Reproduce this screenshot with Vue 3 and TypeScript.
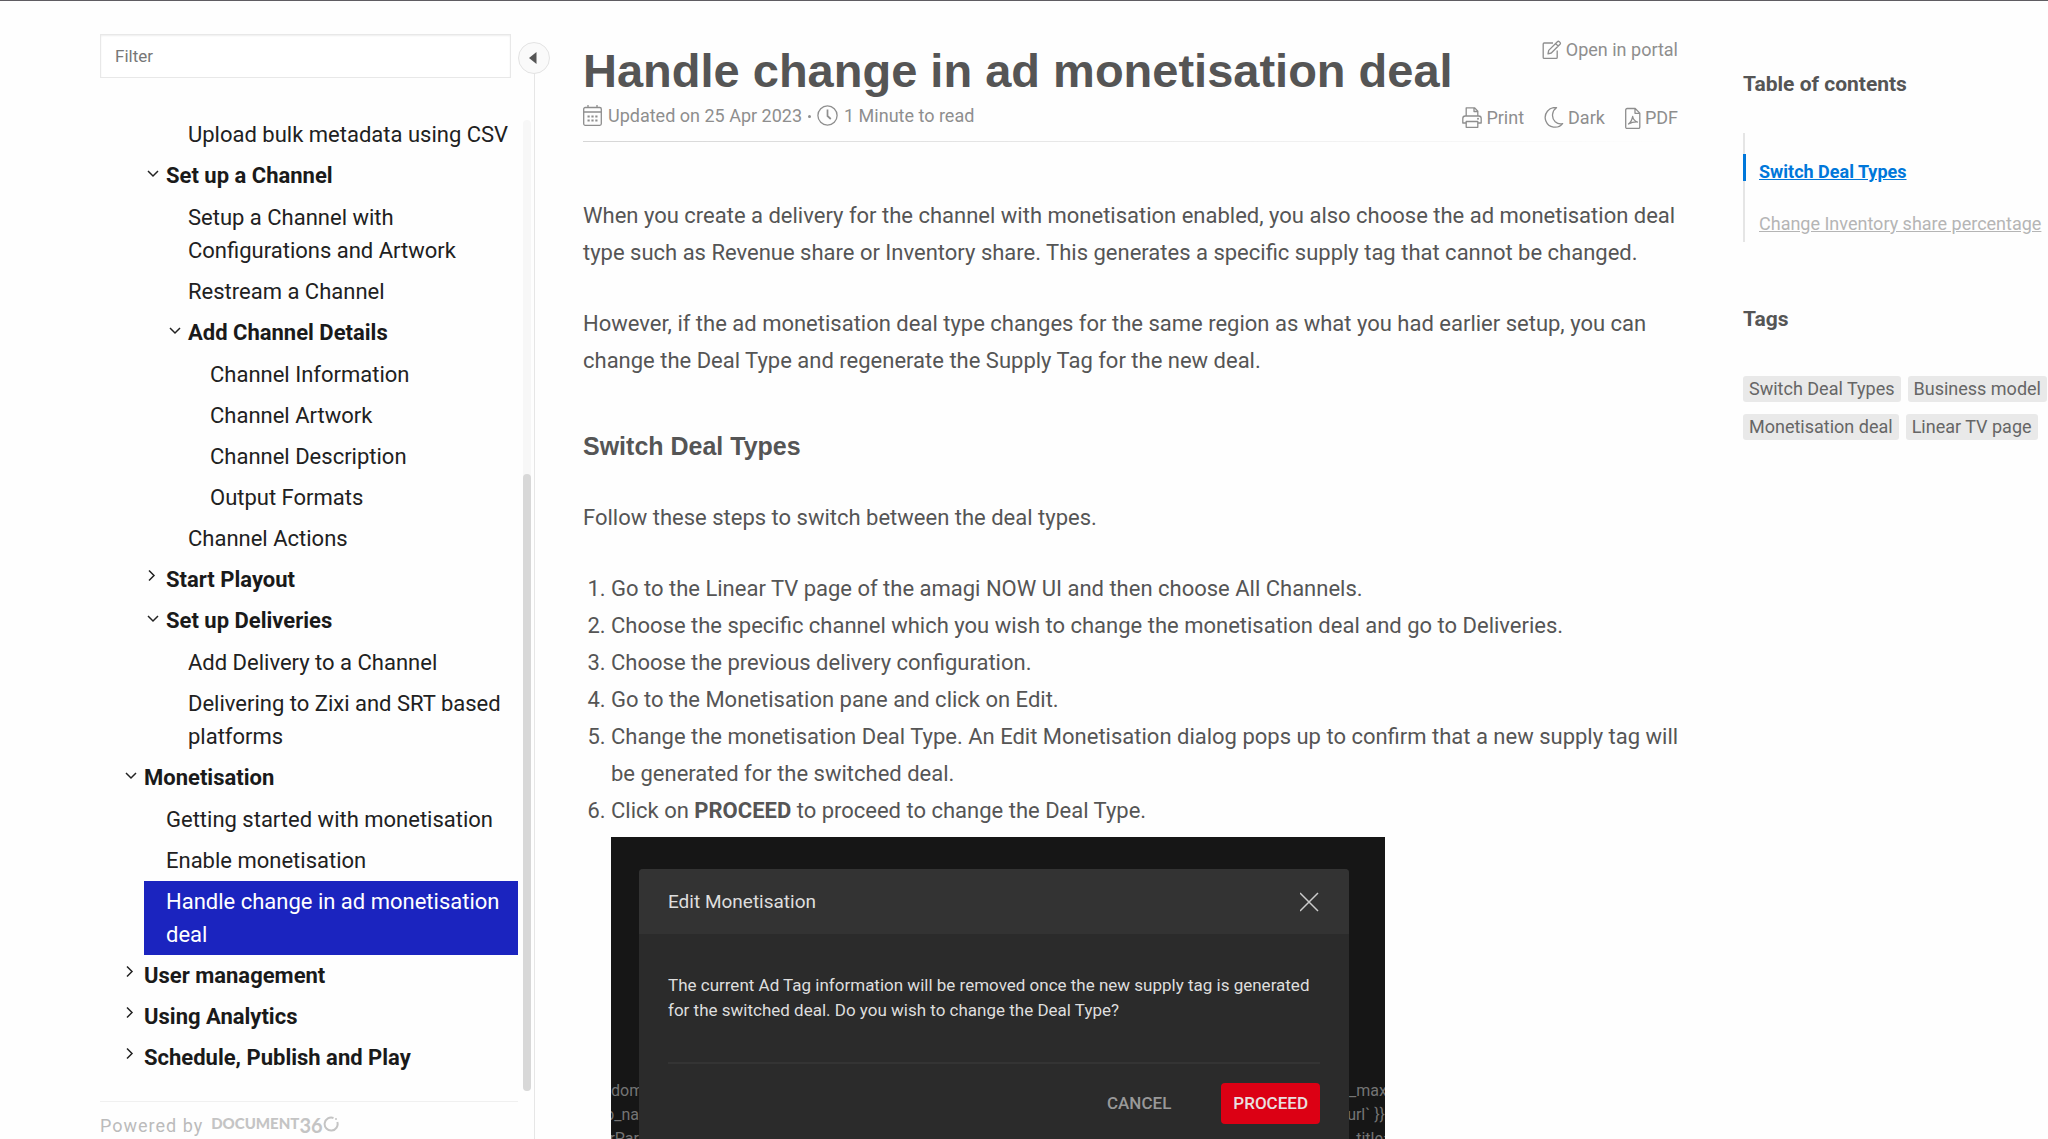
<script setup lang="ts">
import { ref } from 'vue'

interface TreeItem {
  label: string
  level: number
  state?: 'open' | 'closed'
  active?: boolean
}

const INDENT = 22

const tree: TreeItem[] = [
  { label: 'Upload bulk metadata using CSV', level: 3 },
  { label: 'Set up a Channel', level: 2, state: 'open' },
  { label: 'Setup a Channel with Configurations and Artwork', level: 3 },
  { label: 'Restream a Channel', level: 3 },
  { label: 'Add Channel Details', level: 3, state: 'open' },
  { label: 'Channel Information', level: 4 },
  { label: 'Channel Artwork', level: 4 },
  { label: 'Channel Description', level: 4 },
  { label: 'Output Formats', level: 4 },
  { label: 'Channel Actions', level: 3 },
  { label: 'Start Playout', level: 2, state: 'closed' },
  { label: 'Set up Deliveries', level: 2, state: 'open' },
  { label: 'Add Delivery to a Channel', level: 3 },
  { label: 'Delivering to Zixi and SRT based platforms', level: 3 },
  { label: 'Monetisation', level: 1, state: 'open' },
  { label: 'Getting started with monetisation', level: 2 },
  { label: 'Enable monetisation', level: 2 },
  { label: 'Handle change in ad monetisation deal', level: 2, active: true },
  { label: 'User management', level: 1, state: 'closed' },
  { label: 'Using Analytics', level: 1, state: 'closed' },
  { label: 'Schedule, Publish and Play', level: 1, state: 'closed' },
]

const steps: string[] = [
  'Go to the Linear TV page of the amagi NOW UI and then choose All Channels.',
  'Choose the specific channel which you wish to change the monetisation deal and go to Deliveries.',
  'Choose the previous delivery configuration.',
  'Go to the Monetisation pane and click on Edit.',
  'Change the monetisation Deal Type. An Edit Monetisation dialog pops up to confirm that a new supply tag will be generated for the switched deal.',
]

const tags: string[] = ['Switch Deal Types', 'Business model', 'Monetisation deal', 'Linear TV page']

const filter = ref('')
</script>

<template>
  <div class="page">
    <aside class="sidebar">
      <button class="collapse" type="button" aria-label="Collapse navigation">
        <svg width="8" height="12" viewBox="0 0 8 12"><path d="M7.500 0v12L0 6z" fill="#555" /></svg>
      </button>
      <input v-model="filter" class="filter" type="text" placeholder="Filter" aria-label="Filter" />
      <div class="tree-area">
        <nav class="tree-nav">
          <ul class="tree">
            <li
              v-for="item in tree"
              :key="item.label"
              class="node"
              :class="[item.state, { group: item.state, active: item.active }]"
              :style="{ marginLeft: item.level * INDENT + 'px' }"
            >
              <span class="toggle">
                <svg v-if="item.state" width="22" height="33" viewBox="0 0 22 33" fill="none" stroke="#222" stroke-width="1.500">
                  <path v-if="item.state === 'open'" d="M4 12l5 5 5-5" />
                  <path v-else d="M5 7.500l5 5-5 5" />
                </svg>
              </span>
              <a href="#">{{ item.label }}</a>
            </li>
          </ul>
        </nav>
        <div class="track"><div class="thumb"></div></div>
      </div>
      <footer class="powered">
        <span class="by">Powered by</span>
        <a class="brand" href="#" aria-label="Document360">
          <span class="brand-doc">DOCUMENT</span><span class="brand-num">36</span>
          <svg width="16" height="16" viewBox="0 0 16 16" fill="none" stroke="#c4c4c4" stroke-width="2">
            <path d="M10.500 2A6.500 6.500 0 1 0 14.300 6" />
            <circle cx="13" cy="3" r="1" fill="#c4c4c4" stroke="none" />
          </svg>
        </a>
      </footer>
    </aside>

    <main class="article">
      <header>
        <div class="title-row">
          <h1>Handle change in ad monetisation deal</h1>
          <a class="action" href="#">
            <svg width="20" height="20" viewBox="0 0 20 20" fill="none" stroke="currentColor" stroke-width="1.300" stroke-linejoin="round">
              <path d="M11 3H2.200Q1.200 3 1.200 4v13.400q0 1 1 1h12q1 0 1-1V10.500" />
              <path d="M6 13.800l.7-3.400 8.700-8.700q.9-.9 1.900 0l.7.700q.9.900 0 1.900l-8.700 8.700zM13.600 3.500l2.600 2.600" />
            </svg>
            Open in portal
          </a>
        </div>
        <div class="meta-row">
          <div class="meta">
            <svg width="19" height="22" viewBox="0 0 19 22" fill="none" stroke="currentColor" stroke-width="1.300">
              <rect x=".7" y="2.500" width="17.600" height="17.800" rx="1.500" />
              <path d="M.7 7h17.600M5 0v2.500M14 0v2.500" />
              <path d="M4.500 11.500h2.200M8.400 11.500h2.200M12.300 11.500h2.200M4.500 15.500h2.200M8.400 15.500h2.200M12.300 15.500h2.200" stroke-width="2" />
            </svg>
            <span>Updated on 25 Apr 2023</span>
            <span class="dot"></span>
            <svg width="21" height="22" viewBox="0 0 21 22" fill="none" stroke="currentColor" stroke-width="1.300">
              <circle cx="10.500" cy="10.500" r="9.600" />
              <path d="M10.500 4.500V11l3.300 3" stroke-width="1.700" />
            </svg>
            <span>1 Minute to read</span>
          </div>
          <div class="actions">
            <button class="action" type="button">
              <svg width="20" height="22" viewBox="0 0 20 22" fill="none" stroke="currentColor" stroke-width="1.300" stroke-linejoin="round">
                <path d="M4.200 9V.8h8.300l3.300 3.300V9M12 .8v3.700h3.800" />
                <path d="M4.200 16H.8v-4.500q0-2.500 2.500-2.500h13.400q2.500 0 2.500 2.500V16h-3.400" />
                <path d="M4.200 14.500h11.600v5.800H4.200z" />
                <circle cx="16" cy="11.800" r=".4" />
              </svg>
              Print
            </button>
            <button class="action" type="button">
              <svg width="20" height="22" viewBox="0 0 20 22" fill="none" stroke="currentColor" stroke-width="1.300" stroke-linejoin="round">
                <path d="M12.500.7A9.800 9.800 0 1 0 18.600 16.600Q14.500 17.700 11.200 14.700 8 11.500 8.600 7.100 9.200 2.800 12.500.7z" />
              </svg>
              Dark
            </button>
            <button class="action" type="button">
              <svg width="16" height="22" viewBox="0 0 16 22" fill="none" stroke="currentColor" stroke-width="1.300" stroke-linejoin="round">
                <path d="M2.200 1.500h8l4.600 4.600V20q0 1.500-1.500 1.500H2.200Q.7 21.500.7 20V3q0-1.500 1.500-1.500zM10 1.500v4.800h4.800" />
                <path d="M3.500 17q3-2 4.200-7.500.6 4 4.800 5.500-4.500-.3-9 2z" />
              </svg>
              PDF
            </button>
          </div>
        </div>
        <div class="rule"></div>
      </header>

      <p class="lead">
        When you create a delivery for the channel with monetisation enabled, you also choose the ad monetisation deal
        type such as Revenue share or Inventory share. This generates a specific supply tag that cannot be changed.
      </p>
      <p>
        However, if the ad monetisation deal type changes for the same region as what you had earlier setup, you can
        change the Deal Type and regenerate the Supply Tag for the new deal.
      </p>
      <h2>Switch Deal Types</h2>
      <p>Follow these steps to switch between the deal types.</p>
      <ol class="steps">
        <li v-for="step in steps" :key="step">{{ step }}</li>
        <li>
          Click on <b>PROCEED</b> to proceed to change the Deal Type.
          <div class="shot">
            <div class="code code-left">
              <span>dom</span>
              <span class="end">p_na</span>
              <span class="end">rPar</span>
            </div>
            <section class="dialog">
              <div class="dialog-head">
                <span>Edit Monetisation</span>
                <button type="button" class="close" aria-label="Close">
                  <svg width="20" height="20" viewBox="0 0 20 20" stroke="#ccc" stroke-width="1.500"><path d="M0 1l18 18M18 1L0 19" /></svg>
                </button>
              </div>
              <div class="dialog-body">
                <div class="dialog-text">
                  The current Ad Tag information will be removed once the new supply tag is generated<br />
                  for the switched deal. Do you wish to change the Deal Type?
                </div>
                <div class="dialog-actions">
                  <button type="button" class="cancel">CANCEL</button>
                  <button type="button" class="proceed">PROCEED</button>
                </div>
              </div>
            </section>
            <div class="code code-right">
              <span>_max</span>
              <span class="end">url` }}</span>
              <span>_title=</span>
            </div>
          </div>
        </li>
      </ol>
    </main>

    <aside class="side">
      <h3>Table of contents</h3>
      <ul class="toc">
        <li class="current"><a href="#">Switch Deal Types</a></li>
        <li><a href="#">Change Inventory share percentage</a></li>
      </ul>
      <h3>Tags</h3>
      <div class="tags">
        <a v-for="tag in tags" :key="tag" href="#" class="tag">{{ tag }}</a>
      </div>
    </aside>
  </div>
</template>

<style>
body {
  background: #fefefe;
}
</style>

<style scoped>
* {
  box-sizing: border-box;
}
.page {
  display: flex;
  height: 100vh;
  overflow: hidden;
  border-top: 1px solid #5f5d62;
  font-family: Roboto, sans-serif;
  font-size: 22px;
  color: #555;
}
h1,
h2,
h3,
p,
ul,
ol {
  margin: 0;
  padding: 0;
}
ul {
  list-style: none;
}
button {
  border: 0;
  background: none;
  padding: 0;
  font: inherit;
  color: inherit;
  cursor: pointer;
}
a {
  color: inherit;
  text-decoration: none;
}
svg {
  display: block;
  flex: none;
}

.sidebar {
  position: relative;
  flex: none;
  display: flex;
  flex-direction: column;
  width: 535px;
  padding: 33px 4px 0 100px;
}
.sidebar::after {
  content: '';
  position: absolute;
  top: 58px;
  bottom: 0;
  right: 0;
  width: 1px;
  background: #e6e6e6;
}
.collapse {
  position: absolute;
  z-index: 1;
  top: 41px;
  right: -15px;
  display: flex;
  align-items: center;
  justify-content: center;
  width: 32px;
  height: 32px;
  padding-right: 2px;
  border: 1px solid #e3e3e3;
  border-radius: 50%;
  background: #fafafa;
}
.filter {
  flex: none;
  width: 411px;
  height: 44px;
  padding: 0 14px;
  border: 1px solid #e8e8e8;
  box-shadow: inset 0 1px 2px #eee;
  background: #fff;
  font: 17px Roboto, sans-serif;
  color: #555;
  outline: 0;
}
.filter::placeholder {
  color: #777;
}
.tree-area {
  flex: 1;
  display: flex;
  gap: 5px;
  min-height: 0;
  margin-top: 36px;
}
.tree-nav {
  flex: 1;
  overflow: hidden;
}
.node {
  display: flex;
  padding: 4px 6px 4px 0;
  line-height: 33px;
  color: #212121;
}
.group {
  font-weight: 700;
  color: #1a1a1a;
}
.open {
  margin-bottom: 1px;
}
.active {
  background: #1b24bf;
  color: #fff;
}
.toggle {
  flex: none;
  width: 22px;
}
.track {
  display: flex;
  align-items: flex-end;
  width: 8px;
  margin-top: 6px;
  border-radius: 4px;
  background: #f7f7f7;
}
.thumb {
  width: 100%;
  height: calc(64% - 4px);
  border-radius: 4px;
  background: #d8d8d8;
}
.powered {
  display: flex;
  align-items: flex-start;
  gap: 8px;
  height: 38px;
  margin: 10px 13px 0 0;
  padding-top: 12px;
  border-top: 1px solid #f0f0f0;
  color: #bbb;
  line-height: 24px;
}
.by {
  font-size: 18px;
  letter-spacing: 1px;
}
.brand {
  display: flex;
  color: #c4c4c4;
  font-family: Lato, sans-serif;
  font-weight: 900;
}
.brand-doc {
  font-size: 15px;
  line-height: 18px;
}
.brand-num {
  font-size: 20px;
  line-height: 22px;
  font-weight: 700;
}
.brand svg {
  margin-top: 2px;
}

.article {
  flex: 1;
  min-width: 0;
  margin-left: 48px;
  padding-top: 37px;
  line-height: 37px;
}
.title-row,
.meta-row {
  display: flex;
  justify-content: space-between;
  align-items: flex-start;
}
h1 {
  font: bold 47px/66px 'Liberation Sans', Arial, sans-serif;
}
.meta,
.action {
  display: flex;
  align-items: center;
  font-size: 18px;
  line-height: 24px;
  color: #8e8e8e;
}
.action {
  gap: 4px;
}
.meta {
  gap: 6px;
}
.dot {
  width: 3px;
  height: 3px;
  border-radius: 50%;
  background: #8e8e8e;
}
.meta-row {
  height: 28px;
}
.actions {
  display: flex;
  gap: 20px;
  padding-top: 2px;
}
.rule {
  height: 1px;
  margin-top: 9px;
  background: linear-gradient(90deg, #d6d6d6, #fefefe);
}
p {
  margin-bottom: 34px;
}
.lead {
  margin-top: 55px;
}
h2 {
  margin: 49px 0 34px;
  font: bold 25px/37px 'Liberation Sans', Arial, sans-serif;
}
.steps {
  margin-right: -8px;
  padding-left: 28px;
}

.shot {
  display: flex;
  width: 774px;
  max-width: 100%;
  height: 360px;
  margin-top: 8px;
  overflow: hidden;
  background: #161616;
}
.code {
  display: flex;
  flex-direction: column;
  padding-top: 242px;
  overflow: hidden;
  white-space: nowrap;
  font-size: 16px;
  line-height: 24px;
  color: #747474;
}
.code-left {
  width: 28px;
}
.code-right {
  width: 36px;
}
.end {
  align-self: flex-end;
}
.dialog {
  flex: 1;
  margin-top: 32px;
  border-radius: 4px 4px 0 0;
  background: #2b2b2b;
  color: #dedede;
}
.dialog-head {
  display: flex;
  align-items: center;
  justify-content: space-between;
  height: 65px;
  padding: 0 29px;
  border-radius: 4px 4px 0 0;
  background: #333;
  font-size: 19px;
}
.dialog-body {
  padding: 39px 29px 0;
  font-size: 17px;
  line-height: 25px;
}
.dialog-text {
  padding-bottom: 39px;
  border-bottom: 2px solid #343434;
  white-space: nowrap;
}
.dialog-actions {
  display: flex;
  justify-content: flex-end;
  gap: 50px;
  padding-top: 19px;
  font-weight: 500;
}
.cancel {
  color: #999;
}
.proceed {
  height: 41px;
  padding: 0 12px;
  border-radius: 4px;
  background: #dc0014;
  color: #e8e0e0;
}

.side {
  flex: none;
  width: 305px;
  margin-left: 65px;
  padding-top: 69px;
}
h3 {
  font-size: 21px;
  line-height: 28px;
  font-weight: 700;
}
.toc {
  display: flex;
  flex-direction: column;
  gap: 16px;
  margin: 35px 0 63px;
  padding: 21px 0 0 14px;
  border-left: 2px solid #e5e5e5;
  font-size: 18px;
  line-height: 36px;
  color: #b5b5b5;
  white-space: nowrap;
}
.toc a {
  text-decoration: underline;
}
.current {
  position: relative;
  font-weight: 700;
  color: #0077da;
}
.current::before {
  content: '';
  position: absolute;
  top: 0;
  left: -16px;
  width: 3px;
  height: 27px;
  background: #0077da;
}
.tags {
  display: flex;
  flex-wrap: wrap;
  gap: 12px 7px;
  margin-top: 43px;
}
.tag {
  padding: 0 6px;
  border-radius: 3px;
  background: #e9e9e9;
  font-size: 18px;
  line-height: 26px;
  color: #666;
}
</style>
